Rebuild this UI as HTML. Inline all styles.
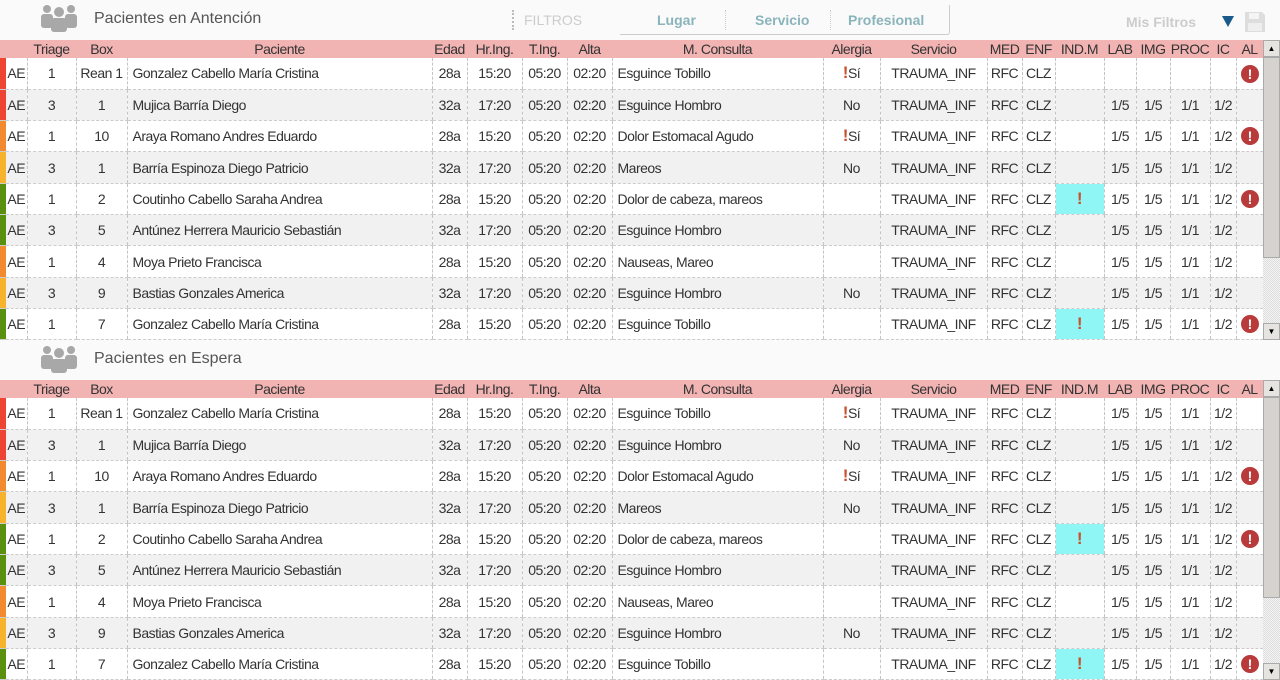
<!DOCTYPE html>
<html><head><meta charset="utf-8">
<style>
*{margin:0;padding:0;box-sizing:border-box}
body{width:1280px;height:680px;overflow:hidden;background:#fafafa;font-family:"Liberation Sans",sans-serif;color:#333;position:relative}
.bar{position:absolute;left:0;width:1280px;height:40px;background:#fafafa}
.title{position:absolute;left:94px;font-size:16px;color:#555}
.icon{position:absolute;left:40px}
table{position:absolute;left:0;width:1263px;border-collapse:collapse;table-layout:fixed;font-size:14px;letter-spacing:-0.5px}
th{background:#f2b3b3;height:18px;font-weight:normal;font-size:14px;color:#333;padding:0;white-space:nowrap;overflow:hidden}
td{height:31.33px;border-left:1px dashed #c4c4c4;border-bottom:1px dashed #ccc;text-align:center;white-space:nowrap;overflow:hidden;padding:0}
td.l{text-align:left;padding-left:5px}
tr:nth-child(odd) td{background:#f1f1f1}
tr:nth-child(even) td{background:#fff}
td.b{border-left:none;padding:0}
td.c{background:#8ff5f5!important}
.ex{color:#c8502a;font-weight:bold;font-size:17px}
.al{display:inline-block;width:18px;height:18px;border-radius:50%;background:#b83a3a;color:#fff;font-weight:bold;font-size:14px;line-height:18px;text-align:center;vertical-align:middle}
td.r{background:#ee4433!important}td.o{background:#f28a30!important}td.y{background:#f7b22e!important}td.g{background:#5a9010!important}
.sb{position:absolute;left:1263px;width:17px;background:repeating-conic-gradient(#ddd 0 25%,#f4f4f4 0 50%) 0 0/2px 2px}
.sb .up,.sb .dn{position:absolute;left:0;width:17px;height:17px;background:#e6e4e0;border:1px solid #aaa;font-size:8px;text-align:center;line-height:15px;color:#000}
.sb .th{position:absolute;left:0;width:17px;background:#d6d3ce;border:1px solid #aaa}
</style></head><body>

<div class="bar" style="top:0"></div>
<svg class="icon" style="top:4px" width="38" height="28" viewBox="0 0 38 28"><g fill="#a8a8a8"><circle cx="7" cy="5" r="4"/><circle cx="31" cy="5" r="4"/><rect x="1" y="10" width="12" height="14" rx="3"/><rect x="25" y="10" width="12" height="14" rx="3"/><circle cx="19" cy="8" r="5"/><rect x="11" y="14" width="16" height="14" rx="3"/></g></svg>
<div class="title" style="top:10px">Pacientes en Antención</div>
<div style="position:absolute;left:512px;top:10px;height:20px;border-left:2px dotted #bbb"></div>
<div style="position:absolute;left:524px;top:12px;font-size:14px;color:#ccc">FILTROS</div>
<div style="position:absolute;left:620px;top:5px;width:330px;height:30px;border-right:1px solid #ccc;border-bottom:1px solid #ccc;border-radius:0 0 3px 0"></div>
<div style="position:absolute;left:657px;top:12px;font-size:14px;color:#8ab4bb;font-weight:bold">Lugar</div>
<div style="position:absolute;left:725px;top:10px;height:20px;border-left:1px dotted #ccc"></div>
<div style="position:absolute;left:755px;top:12px;font-size:14px;color:#8ab4bb;font-weight:bold">Servicio</div>
<div style="position:absolute;left:830px;top:10px;height:20px;border-left:1px dotted #ccc"></div>
<div style="position:absolute;left:848px;top:12px;font-size:14px;color:#8ab4bb;font-weight:bold">Profesional</div>
<div style="position:absolute;left:1126px;top:14px;font-size:14px;color:#ccc;font-weight:bold">Mis Filtros</div>
<div style="position:absolute;left:1222px;top:16px;width:0;height:0;border-left:6px solid transparent;border-right:6px solid transparent;border-top:11px solid #1a5a8a"></div>
<svg style="position:absolute;left:1244px;top:11px" width="22" height="22" viewBox="0 0 22 22"><path d="M1 1h17l3 3v17H1z" fill="#ddd"/><rect x="5" y="2" width="10" height="6" fill="#f4f4f4"/><rect x="4" y="12" width="14" height="8" fill="#eee"/></svg>

<table style="top:40px">
<colgroup><col style="width:6px"><col style="width:21px"><col style="width:49px"><col style="width:51px"><col style="width:305px"><col style="width:35px"><col style="width:55px"><col style="width:45px"><col style="width:45px"><col style="width:211px"><col style="width:57px"><col style="width:107px"><col style="width:35px"><col style="width:33px"><col style="width:49px"><col style="width:32px"><col style="width:34px"><col style="width:40px"><col style="width:26px"><col style="width:27px"></colgroup>
<tr><th></th><th></th><th>Triage</th><th>Box</th><th>Paciente</th><th>Edad</th><th>Hr.Ing.</th><th>T.Ing.</th><th>Alta</th><th>M. Consulta</th><th>Alergia</th><th>Servicio</th><th>MED</th><th>ENF</th><th>IND.M</th><th>LAB</th><th>IMG</th><th>PROC</th><th>IC</th><th>AL</th></tr>
<tr><td class="b r"></td><td class="b">AE</td><td>1</td><td>Rean 1</td><td class="l">Gonzalez Cabello María Cristina</td><td>28a</td><td>15:20</td><td>05:20</td><td>02:20</td><td class="l">Esguince Tobillo</td><td><span class="ex">!</span>Sí</td><td>TRAUMA_INF</td><td>RFC</td><td>CLZ</td><td></td><td></td><td></td><td></td><td></td><td><span class="al">!</span></td></tr>
<tr><td class="b r"></td><td class="b">AE</td><td>3</td><td>1</td><td class="l">Mujica Barría Diego</td><td>32a</td><td>17:20</td><td>05:20</td><td>02:20</td><td class="l">Esguince Hombro</td><td>No</td><td>TRAUMA_INF</td><td>RFC</td><td>CLZ</td><td></td><td>1/5</td><td>1/5</td><td>1/1</td><td>1/2</td><td></td></tr>
<tr><td class="b o"></td><td class="b">AE</td><td>1</td><td>10</td><td class="l">Araya Romano Andres Eduardo</td><td>28a</td><td>15:20</td><td>05:20</td><td>02:20</td><td class="l">Dolor Estomacal Agudo</td><td><span class="ex">!</span>Sí</td><td>TRAUMA_INF</td><td>RFC</td><td>CLZ</td><td></td><td>1/5</td><td>1/5</td><td>1/1</td><td>1/2</td><td><span class="al">!</span></td></tr>
<tr><td class="b y"></td><td class="b">AE</td><td>3</td><td>1</td><td class="l">Barría Espinoza Diego Patricio</td><td>32a</td><td>17:20</td><td>05:20</td><td>02:20</td><td class="l">Mareos</td><td>No</td><td>TRAUMA_INF</td><td>RFC</td><td>CLZ</td><td></td><td>1/5</td><td>1/5</td><td>1/1</td><td>1/2</td><td></td></tr>
<tr><td class="b g"></td><td class="b">AE</td><td>1</td><td>2</td><td class="l">Coutinho Cabello Saraha Andrea</td><td>28a</td><td>15:20</td><td>05:20</td><td>02:20</td><td class="l">Dolor de cabeza, mareos</td><td></td><td>TRAUMA_INF</td><td>RFC</td><td>CLZ</td><td class="c"><span class="ex">!</span></td><td>1/5</td><td>1/5</td><td>1/1</td><td>1/2</td><td><span class="al">!</span></td></tr>
<tr><td class="b g"></td><td class="b">AE</td><td>3</td><td>5</td><td class="l">Antúnez Herrera Mauricio Sebastián</td><td>32a</td><td>17:20</td><td>05:20</td><td>02:20</td><td class="l">Esguince Hombro</td><td></td><td>TRAUMA_INF</td><td>RFC</td><td>CLZ</td><td></td><td>1/5</td><td>1/5</td><td>1/1</td><td>1/2</td><td></td></tr>
<tr><td class="b o"></td><td class="b">AE</td><td>1</td><td>4</td><td class="l">Moya Prieto Francisca</td><td>28a</td><td>15:20</td><td>05:20</td><td>02:20</td><td class="l">Nauseas, Mareo</td><td></td><td>TRAUMA_INF</td><td>RFC</td><td>CLZ</td><td></td><td>1/5</td><td>1/5</td><td>1/1</td><td>1/2</td><td></td></tr>
<tr><td class="b y"></td><td class="b">AE</td><td>3</td><td>9</td><td class="l">Bastias Gonzales America</td><td>32a</td><td>17:20</td><td>05:20</td><td>02:20</td><td class="l">Esguince Hombro</td><td>No</td><td>TRAUMA_INF</td><td>RFC</td><td>CLZ</td><td></td><td>1/5</td><td>1/5</td><td>1/1</td><td>1/2</td><td></td></tr>
<tr><td class="b g"></td><td class="b">AE</td><td>1</td><td>7</td><td class="l">Gonzalez Cabello María Cristina</td><td>28a</td><td>15:20</td><td>05:20</td><td>02:20</td><td class="l">Esguince Tobillo</td><td></td><td>TRAUMA_INF</td><td>RFC</td><td>CLZ</td><td class="c"><span class="ex">!</span></td><td>1/5</td><td>1/5</td><td>1/1</td><td>1/2</td><td><span class="al">!</span></td></tr>
</table>
<div class="sb" style="top:40px;height:300px"><div class="up" style="top:0">▲</div><div class="th" style="top:17px;height:201px"></div><div class="dn" style="top:283px">▼</div></div>

<svg class="icon" style="top:345px" width="38" height="28" viewBox="0 0 38 28"><g fill="#a8a8a8"><circle cx="7" cy="5" r="4"/><circle cx="31" cy="5" r="4"/><rect x="1" y="10" width="12" height="14" rx="3"/><rect x="25" y="10" width="12" height="14" rx="3"/><circle cx="19" cy="8" r="5"/><rect x="11" y="14" width="16" height="14" rx="3"/></g></svg>
<div class="title" style="top:350px">Pacientes en Espera</div>

<table style="top:380px">
<colgroup><col style="width:6px"><col style="width:21px"><col style="width:49px"><col style="width:51px"><col style="width:305px"><col style="width:35px"><col style="width:55px"><col style="width:45px"><col style="width:45px"><col style="width:211px"><col style="width:57px"><col style="width:107px"><col style="width:35px"><col style="width:33px"><col style="width:49px"><col style="width:32px"><col style="width:34px"><col style="width:40px"><col style="width:26px"><col style="width:27px"></colgroup>
<tr><th></th><th></th><th>Triage</th><th>Box</th><th>Paciente</th><th>Edad</th><th>Hr.Ing.</th><th>T.Ing.</th><th>Alta</th><th>M. Consulta</th><th>Alergia</th><th>Servicio</th><th>MED</th><th>ENF</th><th>IND.M</th><th>LAB</th><th>IMG</th><th>PROC</th><th>IC</th><th>AL</th></tr>
<tr><td class="b r"></td><td class="b">AE</td><td>1</td><td>Rean 1</td><td class="l">Gonzalez Cabello María Cristina</td><td>28a</td><td>15:20</td><td>05:20</td><td>02:20</td><td class="l">Esguince Tobillo</td><td><span class="ex">!</span>Sí</td><td>TRAUMA_INF</td><td>RFC</td><td>CLZ</td><td></td><td>1/5</td><td>1/5</td><td>1/1</td><td>1/2</td><td></td></tr>
<tr><td class="b r"></td><td class="b">AE</td><td>3</td><td>1</td><td class="l">Mujica Barría Diego</td><td>32a</td><td>17:20</td><td>05:20</td><td>02:20</td><td class="l">Esguince Hombro</td><td>No</td><td>TRAUMA_INF</td><td>RFC</td><td>CLZ</td><td></td><td>1/5</td><td>1/5</td><td>1/1</td><td>1/2</td><td></td></tr>
<tr><td class="b o"></td><td class="b">AE</td><td>1</td><td>10</td><td class="l">Araya Romano Andres Eduardo</td><td>28a</td><td>15:20</td><td>05:20</td><td>02:20</td><td class="l">Dolor Estomacal Agudo</td><td><span class="ex">!</span>Sí</td><td>TRAUMA_INF</td><td>RFC</td><td>CLZ</td><td></td><td>1/5</td><td>1/5</td><td>1/1</td><td>1/2</td><td><span class="al">!</span></td></tr>
<tr><td class="b y"></td><td class="b">AE</td><td>3</td><td>1</td><td class="l">Barría Espinoza Diego Patricio</td><td>32a</td><td>17:20</td><td>05:20</td><td>02:20</td><td class="l">Mareos</td><td>No</td><td>TRAUMA_INF</td><td>RFC</td><td>CLZ</td><td></td><td>1/5</td><td>1/5</td><td>1/1</td><td>1/2</td><td></td></tr>
<tr><td class="b g"></td><td class="b">AE</td><td>1</td><td>2</td><td class="l">Coutinho Cabello Saraha Andrea</td><td>28a</td><td>15:20</td><td>05:20</td><td>02:20</td><td class="l">Dolor de cabeza, mareos</td><td></td><td>TRAUMA_INF</td><td>RFC</td><td>CLZ</td><td class="c"><span class="ex">!</span></td><td>1/5</td><td>1/5</td><td>1/1</td><td>1/2</td><td><span class="al">!</span></td></tr>
<tr><td class="b g"></td><td class="b">AE</td><td>3</td><td>5</td><td class="l">Antúnez Herrera Mauricio Sebastián</td><td>32a</td><td>17:20</td><td>05:20</td><td>02:20</td><td class="l">Esguince Hombro</td><td></td><td>TRAUMA_INF</td><td>RFC</td><td>CLZ</td><td></td><td>1/5</td><td>1/5</td><td>1/1</td><td>1/2</td><td></td></tr>
<tr><td class="b o"></td><td class="b">AE</td><td>1</td><td>4</td><td class="l">Moya Prieto Francisca</td><td>28a</td><td>15:20</td><td>05:20</td><td>02:20</td><td class="l">Nauseas, Mareo</td><td></td><td>TRAUMA_INF</td><td>RFC</td><td>CLZ</td><td></td><td>1/5</td><td>1/5</td><td>1/1</td><td>1/2</td><td></td></tr>
<tr><td class="b y"></td><td class="b">AE</td><td>3</td><td>9</td><td class="l">Bastias Gonzales America</td><td>32a</td><td>17:20</td><td>05:20</td><td>02:20</td><td class="l">Esguince Hombro</td><td>No</td><td>TRAUMA_INF</td><td>RFC</td><td>CLZ</td><td></td><td>1/5</td><td>1/5</td><td>1/1</td><td>1/2</td><td></td></tr>
<tr><td class="b g"></td><td class="b">AE</td><td>1</td><td>7</td><td class="l">Gonzalez Cabello María Cristina</td><td>28a</td><td>15:20</td><td>05:20</td><td>02:20</td><td class="l">Esguince Tobillo</td><td></td><td>TRAUMA_INF</td><td>RFC</td><td>CLZ</td><td class="c"><span class="ex">!</span></td><td>1/5</td><td>1/5</td><td>1/1</td><td>1/2</td><td><span class="al">!</span></td></tr>
</table>
<div class="sb" style="top:380px;height:300px"><div class="up" style="top:0">▲</div><div class="th" style="top:17px;height:201px"></div><div class="dn" style="top:283px">▼</div></div>
</body></html>
